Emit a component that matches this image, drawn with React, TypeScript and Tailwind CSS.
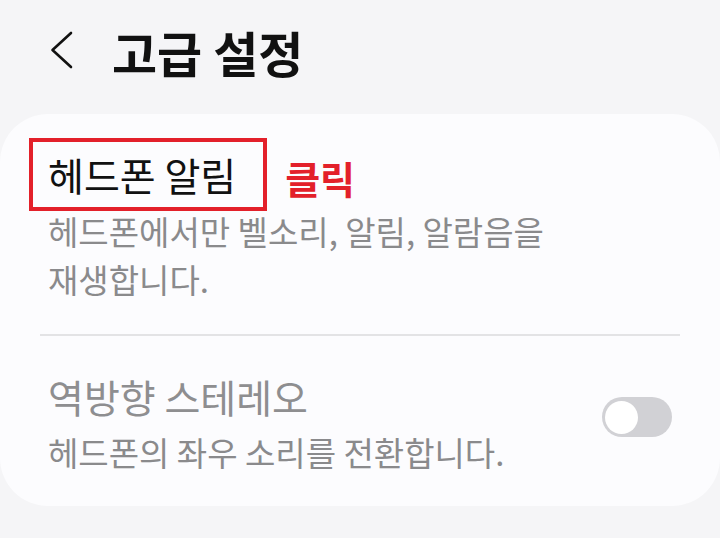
const font = { fontFamily: '"Noto Sans CJK KR", "Noto Sans", sans-serif' }

function BackIcon() {
  return (
    <svg width="24" height="40" viewBox="0 0 24 40" fill="none">
      <path d="M21 3 L2.5 20 L21 37" stroke="#111" strokeWidth="2.6" strokeLinecap="round" strokeLinejoin="round" />
    </svg>
  )
}

function Toggle() {
  return (
    <div className="mt-[29px] flex h-[40px] w-[70px] shrink-0 items-center rounded-full bg-[#d1d1d5] px-[3px]">
      <div className="h-[33px] w-[33px] rounded-full bg-white" />
    </div>
  )
}

export default function App() {
  return (
    <div className="h-[538px] w-[720px] overflow-hidden bg-[#f5f5f7]" style={font}>
      <header className="flex h-[114px] items-start pl-[50px] pt-[27px]">
        <div className="mt-[3px]">
          <BackIcon />
        </div>
        <h1 className="ml-[38px] text-[49px] font-bold leading-none text-[#111]">고급 설정</h1>
      </header>

      <section className="rounded-[48px] bg-[#fcfcfe] pb-[30px]">
        <div className="px-[48px] pt-[32px] pb-[31px]">
          <div className="flex items-center">
            <span className="relative text-[39px] leading-[56px] text-[#111]">
              헤드폰 알림
              <span className="absolute -top-[8px] -bottom-[9px] -left-[19px] -right-[31px] border-4 border-[#e3202a]" />
            </span>
            <span className="ml-[49px] mt-[8px] text-[38px] font-bold leading-[48px] text-[#e3202a]">클릭</span>
          </div>
          <p className="mt-[5px] text-[33px] leading-[48px] text-[#8a8a8c]">
            헤드폰에서만 벨소리, 알림, 알람음을
            <br />
            재생합니다.
          </p>
        </div>

        <div className="mx-[40px] h-[2px] bg-[#e3e3e5]" />

        <div className="flex items-start justify-between px-[48px] pt-[32px]">
          <div>
            <div className="text-[39px] leading-[56px] text-[#8e8e90]">역방향 스테레오</div>
            <div className="mt-[4px] text-[33px] leading-[48px] text-[#8a8a8c]">헤드폰의 좌우 소리를 전환합니다.</div>
          </div>
          <Toggle />
        </div>
      </section>
    </div>
  )
}
